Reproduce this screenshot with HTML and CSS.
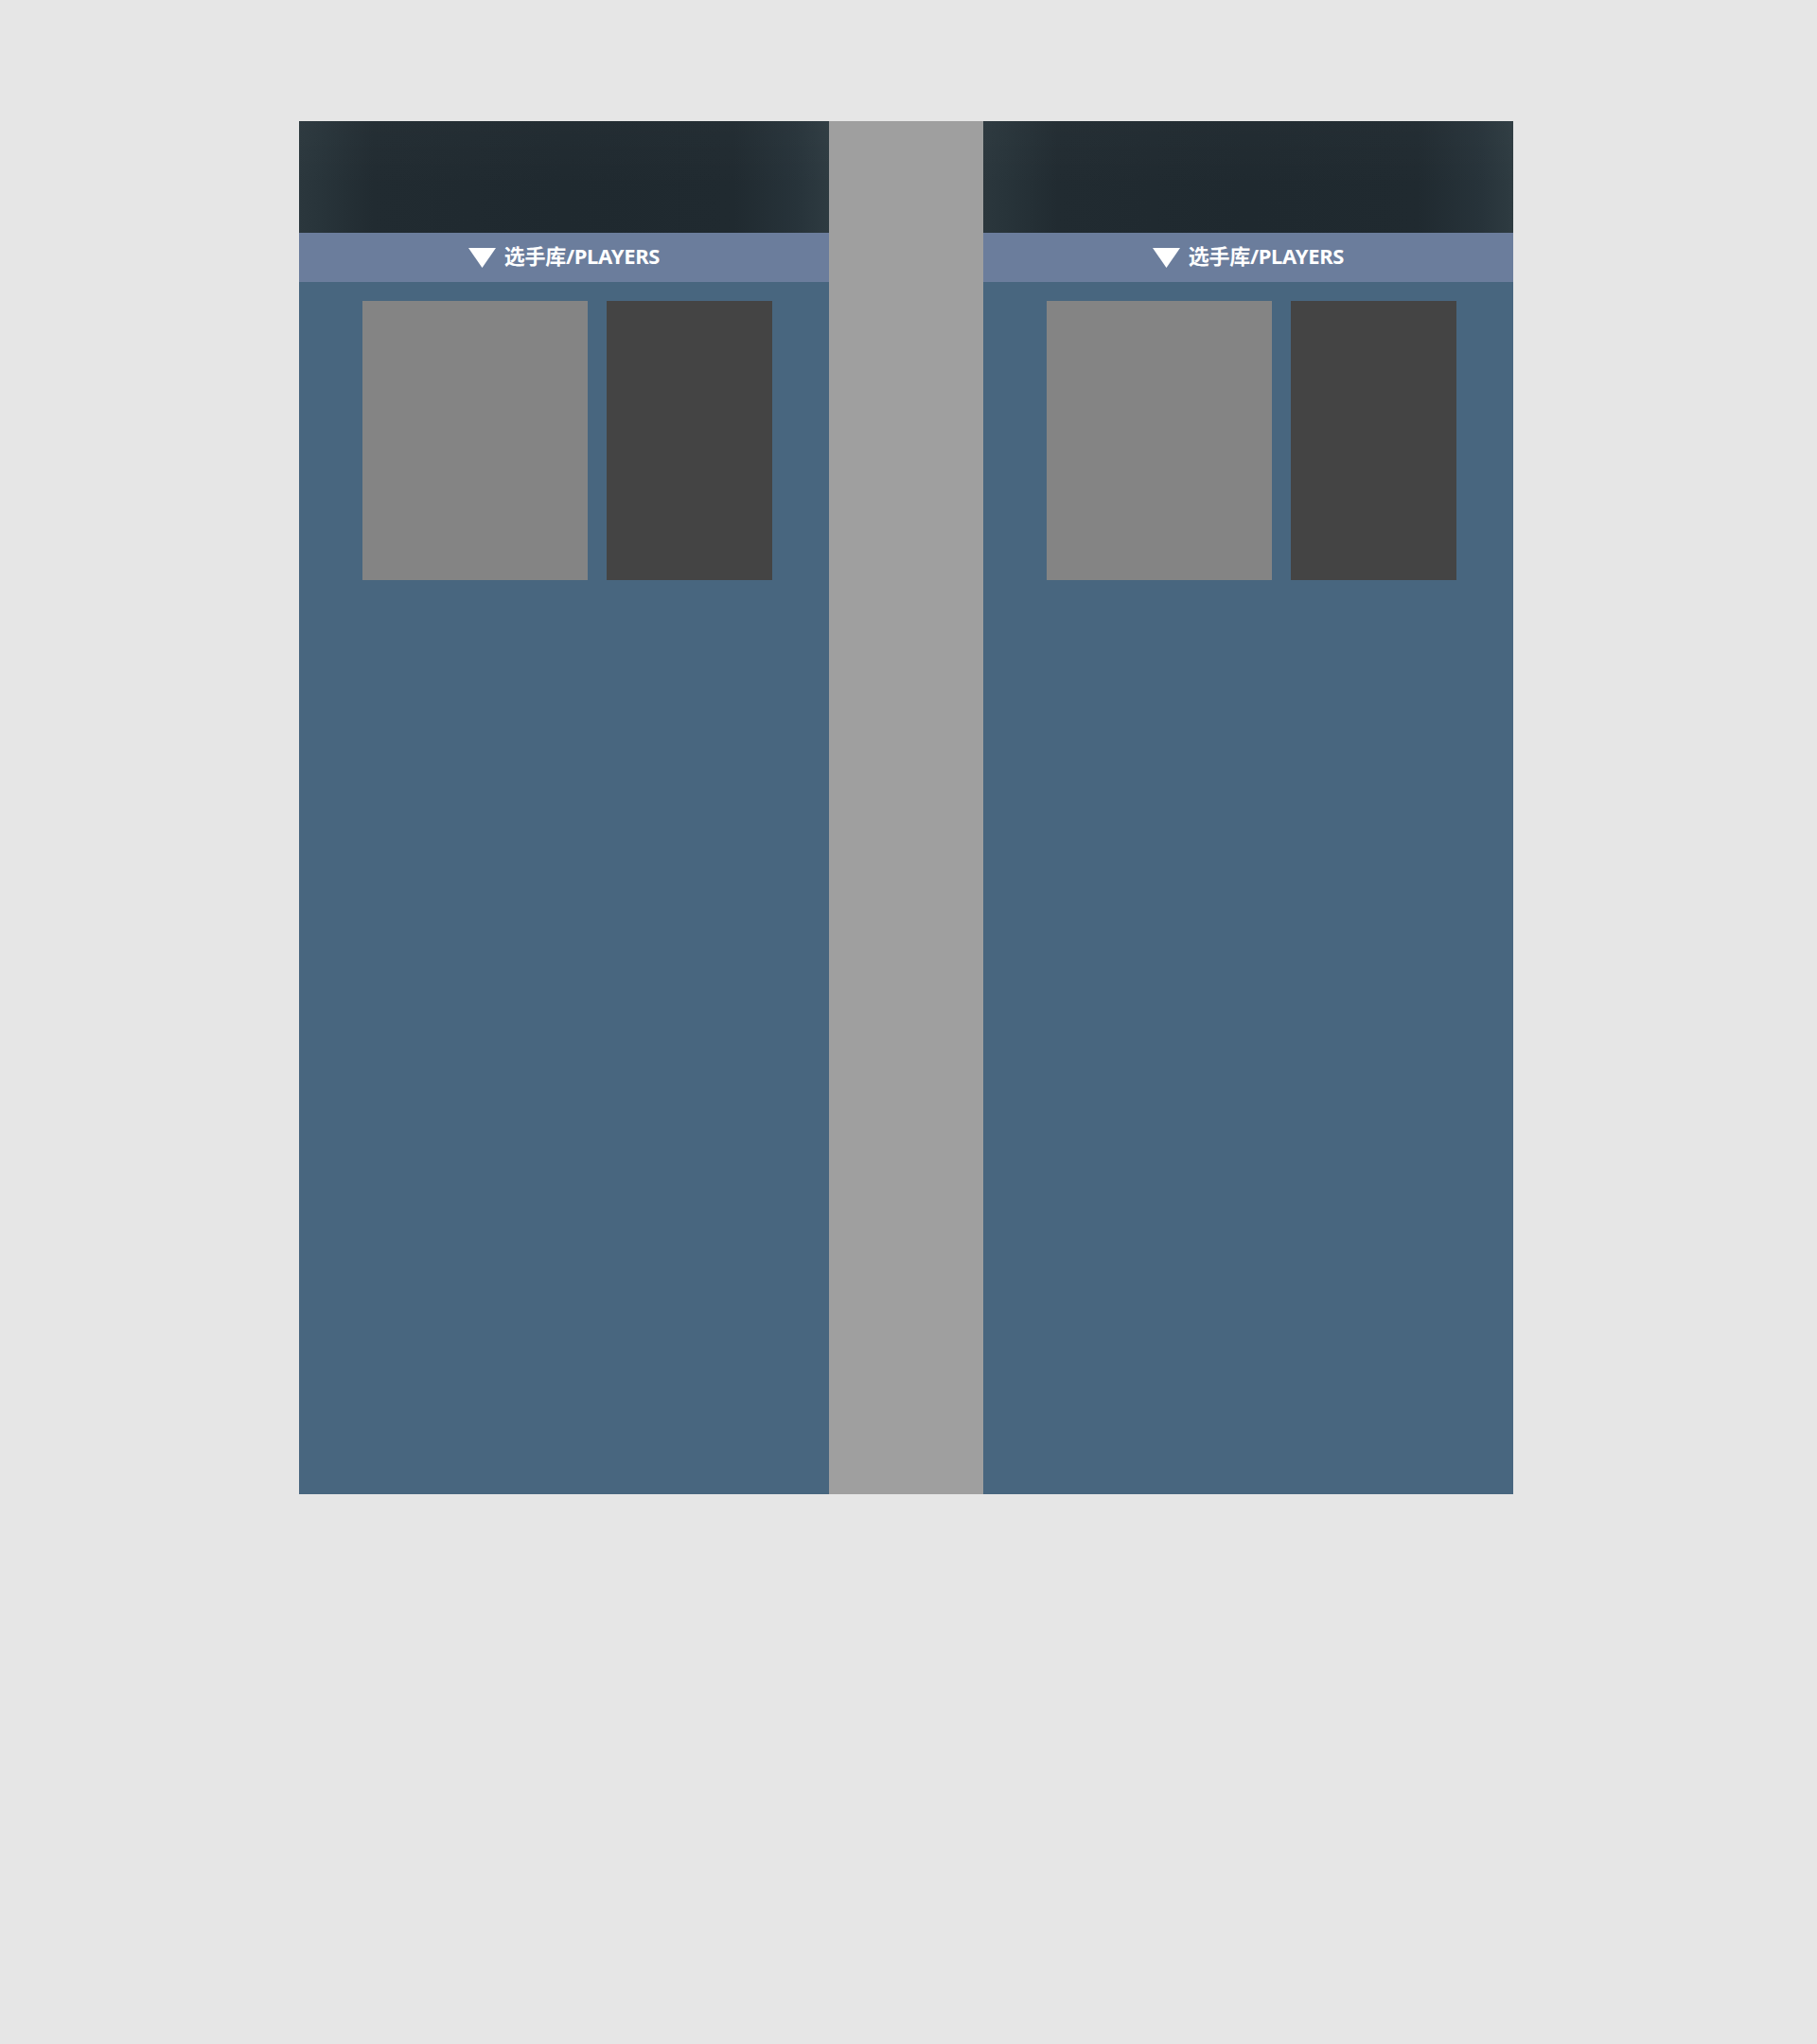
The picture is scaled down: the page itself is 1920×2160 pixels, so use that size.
FILE: index.html
```html
<!DOCTYPE html>
<html lang="zh">
<head>
<meta charset="utf-8">
<title>选手库</title>
<link rel="stylesheet" href="styles.css">
</head>
<body>
<div class="stage">
  <section class="panel">
    <div class="banner"></div>
    <div class="bar">
      <svg class="tri" width="29" height="21" viewBox="0 0 29 21"><polygon points="0,0 29,0 14.5,21" fill="#fff"/></svg>
      <span class="title">选手库/PLAYERS</span>
    </div>
    <div class="content">
      <div class="card light"></div>
      <div class="card dark"></div>
    </div>
  </section>
  <div class="divider"></div>
  <section class="panel">
    <div class="banner"></div>
    <div class="bar">
      <svg class="tri" width="29" height="21" viewBox="0 0 29 21"><polygon points="0,0 29,0 14.5,21" fill="#fff"/></svg>
      <span class="title">选手库/PLAYERS</span>
    </div>
    <div class="content">
      <div class="card light"></div>
      <div class="card dark"></div>
    </div>
  </section>
</div>
</body>
</html>
```

FILE: styles.css
```css
html, body {
  margin: 0;
  padding: 0;
  background: #e6e6e6;
  width: 1920px;
  height: 2160px;
}
body {
  font-family: "Noto Sans", "Noto Sans CJK SC", sans-serif;
}
.stage {
  display: flex;
  margin-left: 316px;
  padding-top: 128px;
  height: 1451px;
}
.panel {
  width: 560px;
  height: 1451px;
  background: #48667f;
  display: flex;
  flex-direction: column;
}
.divider {
  width: 163px;
  height: 1451px;
  background: #9f9f9f;
}
.banner {
  height: 118px;
  background:
    linear-gradient(180deg, rgba(255,255,255,0.02) 0%, rgba(0,0,0,0) 60%),
    linear-gradient(90deg, #2b373d 0%, #28343a 4%, #212b31 14%, #1f292f 50%, #202a30 82%, #27333a 94%, #2e3b41 100%);
}
.bar {
  height: 52px;
  background: #6b7d9c;
  display: flex;
  align-items: center;
  justify-content: center;
  gap: 9px;
}
.tri {
  display: block;
  margin-top: 0;
}
.title {
  color: #fff;
  font-weight: 700;
  font-size: 22px;
  line-height: 1;
  letter-spacing: -0.3px;
  margin-top: -4px;
}
.content {
  display: flex;
  gap: 20px;
  padding: 20px 0 0 67px;
}
.card {
  height: 295px;
}
.card.light {
  width: 238px;
  background: #848484;
}
.card.dark {
  width: 175px;
  background: #444444;
}
```
